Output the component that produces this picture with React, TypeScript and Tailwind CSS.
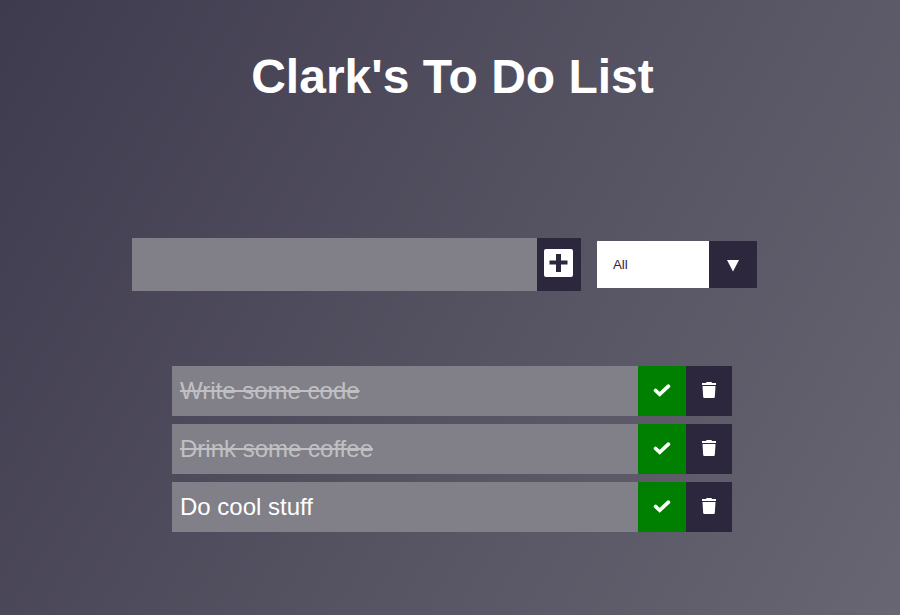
const todos = [
  { text: "Write some code", done: true },
  { text: "Drink some coffee", done: true },
  { text: "Do cool stuff", done: false },
];

function PlusSquare() {
  return (
    <svg width="29" height="28" viewBox="0 0 29 28" aria-hidden="true">
      <rect width="29" height="28" rx="2" fill="white" />
      <path d="M12 5h5v6.500h6.500v4H17v7.500h-5v-7.500H5.500v-4H12z" fill="#2c273c" />
    </svg>
  );
}

function Check() {
  return (
    <svg width="18" height="16" viewBox="0 0 18 16" aria-hidden="true">
      <path d="M2.600 8.500l4.100 3.800 8.700-8.100" fill="none" stroke="white" strokeWidth="3.700" strokeLinecap="round" strokeLinejoin="miter" />
    </svg>
  );
}

function Trash() {
  return (
    <svg width="16" height="16" viewBox="0 0 16 16" aria-hidden="true">
      <path d="M1 1H5L5.500 0h5L11 1H15V3H1zM1.500 4h13l-0.700 11q-0.100 1-1 1H3.200q-0.900 0-1-1z" fill="white" />
    </svg>
  );
}

export default function App() {
  return (
    <div className="h-[615px] w-[900px] overflow-hidden bg-[linear-gradient(120deg,#3f3b4f,#686672)] font-['Liberation_Sans',Arial,sans-serif] text-white">
      <header className="flex h-[154px] items-center justify-center pl-[5px] text-[48px] font-bold">
        <h1>Clark's To Do List</h1>
      </header>
      <form className="mt-[84px] flex h-[53px] items-center pl-[132px]">
        <div className="h-[53px] w-[405px] bg-[#817f87]" />
        <button type="button" className="flex h-[53px] w-[44px] justify-center bg-[#2c273c] pt-[11px] pr-px">
          <PlusSquare />
        </button>
        <div className="ml-4 flex h-[47px] w-[160px]">
          <div className="flex w-[112px] items-center bg-white pl-4 text-[13.33px] tracking-[-0.1px] text-[#2c273c]">All</div>
          <div className="flex w-12 justify-center bg-[#2c273c] pt-[19px]">
            <svg width="12" height="12" viewBox="0 0 12 12" aria-hidden="true">
              <path d="M0 0h12L6 11.500z" fill="white" />
            </svg>
          </div>
        </div>
      </form>
      <ul className="mt-[75px] ml-[172px] flex w-[560px] flex-col gap-2">
        {todos.map((todo) => (
          <li key={todo.text} className="flex h-[50px] bg-[#817f87] text-[24px]">
            <div className="flex flex-1 items-center pl-2">
              <span className={todo.done ? "line-through opacity-50" : ""}>{todo.text}</span>
            </div>
            <button type="button" className="flex w-12 items-center justify-center bg-[#008000] pb-0.5"><Check /></button>
            <button type="button" className="flex w-[46px] items-center justify-center bg-[#2c273c] pb-0.5"><Trash /></button>
          </li>
        ))}
      </ul>
    </div>
  );
}
